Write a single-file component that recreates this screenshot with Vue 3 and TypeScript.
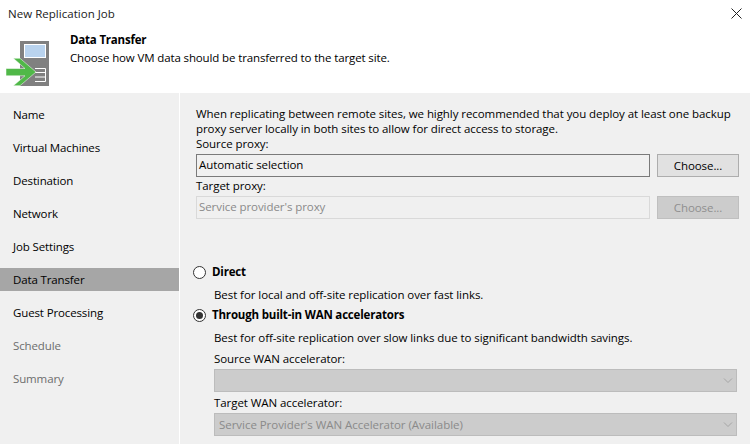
<template>
    <div class="dialog">
        <div class="titlebar">
            <span>New Replication Job</span>
            <svg class="close" width="11" height="11" viewBox="0 0 11 11">
                <path d="M0.5 0.5L10.5 10.5M10.5 0.5L0.5 10.5" stroke="#222" stroke-width="1" fill="none" />
            </svg>
        </div>
        <header class="banner">
            <svg class="logo" width="45" height="47" viewBox="5 40 45 47">
                <rect x="20" y="41" width="29" height="45" fill="#808080" />
                <rect x="24.5" y="44.5" width="21" height="13" fill="#b9d3ee" stroke="#fff" />
                <path d="M35 68.5H45.5V81.5H35M35 72.5H45.5M35 77H45.5" fill="none" stroke="#fff" />
                <path
                    d="M6 68.5H25L13.3 58.3H20L36 72L20 85.7H13.3L25 75.8H6Z"
                    fill="#50b848"
                    stroke="#fff"
                    stroke-width="0.5" />
            </svg>
            <div class="banner-text">
                <h1>Data Transfer</h1>
                <p>Choose how VM data should be transferred to the target site.</p>
            </div>
        </header>
        <div class="body">
            <nav class="steps">
                <div
                    v-for="step in steps"
                    :key="step.name"
                    class="step"
                    :class="{ active: step.name === current, disabled: step.disabled }">
                    {{ step.name }}
                </div>
            </nav>
            <main class="content">
                <p class="intro">
                    When replicating between remote sites, we highly recommended that you deploy at least one backup<br />
                    proxy server locally in both sites to allow for direct access to storage.
                </p>
                <label class="field-label">Source proxy:</label>
                <div class="proxy-row">
                    <div class="textbox">Automatic selection</div>
                    <button class="btn">Choose...</button>
                </div>
                <label class="field-label target">Target proxy:</label>
                <div class="proxy-row">
                    <div class="textbox off">Service provider's proxy</div>
                    <button class="btn off">Choose...</button>
                </div>

                <div class="radio first">
                    <span class="dot"></span>
                    <strong>Direct</strong>
                </div>
                <p class="hint">Best for local and off-site replication over fast links.</p>
                <div class="radio">
                    <span class="dot on"></span>
                    <strong>Through built-in WAN accelerators</strong>
                </div>
                <p class="hint">Best for off-site replication over slow links due to significant bandwidth savings.</p>

                <label class="wan-label first">Source WAN accelerator:</label>
                <div class="combo">
                    <span></span>
                    <svg width="10" height="6" viewBox="0 0 10 6">
                        <path d="M1 0.5L5 4.5L9 0.5" fill="none" stroke="#a5a5a5" />
                    </svg>
                </div>
                <label class="wan-label">Target WAN accelerator:</label>
                <div class="combo">
                    <span>Service Provider's WAN Accelerator (Available)</span>
                    <svg width="10" height="6" viewBox="0 0 10 6">
                        <path d="M1 0.5L5 4.5L9 0.5" fill="none" stroke="#a5a5a5" />
                    </svg>
                </div>
            </main>
        </div>
    </div>
</template>

<script setup lang="ts">
interface Step {
    name: string;
    disabled?: boolean;
}

const current: string = 'Data Transfer';

const steps: Step[] = [
    { name: 'Name' },
    { name: 'Virtual Machines' },
    { name: 'Destination' },
    { name: 'Network' },
    { name: 'Job Settings' },
    { name: 'Data Transfer' },
    { name: 'Guest Processing' },
    { name: 'Schedule', disabled: true },
    { name: 'Summary', disabled: true }
];
</script>

<style>
html,
body {
    margin: 0;
    background: #f0f0f0;
    overflow: hidden;
}
</style>

<style scoped>
.dialog {
    width: 750px;
    height: 444px;
    overflow: hidden;
    font-family: 'Open Sans', 'Noto Sans', sans-serif;
    font-size: 11.5px;
    letter-spacing: -0.13px;
    line-height: 15px;
    color: #000;
    background: #f0f0f0;
    display: flex;
    flex-direction: column;
}

.titlebar {
    height: 27px;
    background: #fff;
    display: flex;
    justify-content: space-between;
    padding: 6px 8px 0 8px;
    box-sizing: border-box;
    color: #1a1a1a;
    letter-spacing: 0.03px;
}

.close {
    margin-top: 2px;
}

.banner {
    height: 66px;
    background: #fff;
    display: flex;
    box-sizing: border-box;
    padding: 5px 0 0 5px;
}

.logo {
    margin-top: 8px;
}

.banner-text {
    margin-left: 20px;
}

h1 {
    margin: 0 0 3px;
    font-size: 11.5px;
    line-height: 15px;
    font-weight: 700;
    letter-spacing: -0.2px;
}

.banner-text p {
    margin: 0;
}

.body {
    flex: 1;
    display: flex;
    min-height: 0;
}

.steps {
    width: 179px;
    border-right: 1px solid #fff;
    padding-top: 10px;
    display: flex;
    flex-direction: column;
    gap: 10px;
}

.step {
    height: 23px;
    line-height: 23px;
    padding-left: 13px;
}

.step.active {
    background: #a6a6a6;
}

.step.disabled {
    color: #6d6d6d;
}

.content {
    flex: 1;
    padding: 13px 11px 0 16px;
    min-width: 0;
    white-space: nowrap;
    letter-spacing: -0.07px;
}

.intro {
    margin: 0;
}

.field-label {
    display: block;
}

.field-label.target {
    margin-top: 1px;
}

.proxy-row {
    display: flex;
    gap: 7px;
    margin-top: 3px;
    height: 23px;
}

.textbox {
    flex: 1;
    box-sizing: border-box;
    border: 1px solid #7a7a7a;
    line-height: 19px;
    padding-left: 2px;
}

.textbox.off {
    border-color: #d9d9d9;
    color: #8a8a8a;
}

.btn {
    width: 82px;
    padding: 0;
    box-sizing: border-box;
    border: 1px solid #adadad;
    background: #e1e1e1;
    font: inherit;
    letter-spacing: inherit;
    color: #000;
}

.btn.off {
    background: #cccccc;
    border-color: #bfbfbf;
    color: #8f8f8f;
}

.radio {
    display: flex;
    margin-left: -3px;
    gap: 6px;
    height: 15px;
    margin-top: 5px;
}

.radio.first {
    margin-top: 45px;
}

.radio strong {
    font-weight: 700;
    letter-spacing: -0.18px;
}

.dot {
    width: 13px;
    height: 13px;
    margin-top: 2px;
    box-sizing: border-box;
    border: 1px solid #333;
    border-radius: 50%;
    background: #fff;
    position: relative;
}

.dot.on::after {
    content: '';
    position: absolute;
    inset: 2px;
    border-radius: 50%;
    background: #333;
}

.hint {
    margin: 8px 0 0 18px;
}

.wan-label {
    display: block;
    margin: 3px 0 3px 18px;
}

.wan-label.first {
    margin-top: 6px;
}

.combo {
    margin: 0 2px 0 18px;
    height: 23px;
    box-sizing: border-box;
    border: 1px solid #bcbcbc;
    background: #cccccc;
    color: #8a8a8a;
    display: flex;
    align-items: center;
    justify-content: space-between;
    padding: 0 3px 0 4px;
    letter-spacing: -0.04px;
}
</style>
